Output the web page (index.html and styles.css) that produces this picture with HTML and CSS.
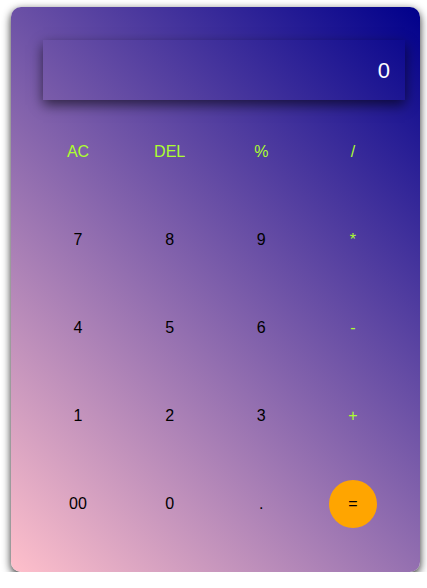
FILE: index.html
```html
<!DOCTYPE html>
<html>
<head>
<meta charset="utf-8">
<link rel="stylesheet" href="styles.css">
</head>
<body>
<div class="calculator">
  <div class="display">0</div>
  <div class="keys">
    <button class="key op">AC</button>
    <button class="key op">DEL</button>
    <button class="key op">%</button>
    <button class="key op">/</button>
    <button class="key">7</button>
    <button class="key">8</button>
    <button class="key">9</button>
    <button class="key op">*</button>
    <button class="key">4</button>
    <button class="key">5</button>
    <button class="key">6</button>
    <button class="key op">-</button>
    <button class="key">1</button>
    <button class="key">2</button>
    <button class="key">3</button>
    <button class="key op">+</button>
    <button class="key">00</button>
    <button class="key">0</button>
    <button class="key">.</button>
    <button class="key equal">=</button>
  </div>
</div>
</body>
</html>
```
FILE: styles.css
```css
html, body {
  margin: 0;
  padding: 0;
}
body {
  padding: 7px 0 0 11px;
  font-family: "Liberation Sans", Arial, sans-serif;
}
.calculator {
  box-sizing: border-box;
  width: 409px;
  height: 565px;
  border-radius: 10px;
  background: linear-gradient(45deg, pink, darkblue);
  box-shadow: 0 3px 8px rgba(0, 0, 0, 0.85);
  padding: 33px 0 0 32px;
}
.display {
  box-sizing: border-box;
  width: 362px;
  height: 60px;
  box-shadow: 0 5px 12px rgba(0, 0, 0, 0.6);
  color: #fff;
  font-size: 22px;
  display: flex;
  align-items: center;
  justify-content: flex-end;
  padding-right: 15px;
  padding-top: 1px;
}
.keys {
  display: grid;
  grid-template-columns: repeat(4, 48px);
  grid-auto-rows: 48px;
  column-gap: 43.67px;
  row-gap: 40px;
  margin-top: 28px;
  padding-left: 11px;
}
.key {
  width: 48px;
  height: 48px;
  border: none;
  background: transparent;
  padding: 0;
  font-family: "Liberation Sans", Arial, sans-serif;
  font-size: 16px;
  color: #000;
}
.op {
  color: greenyellow;
}
.equal {
  background: orange;
  border-radius: 50%;
}
```
